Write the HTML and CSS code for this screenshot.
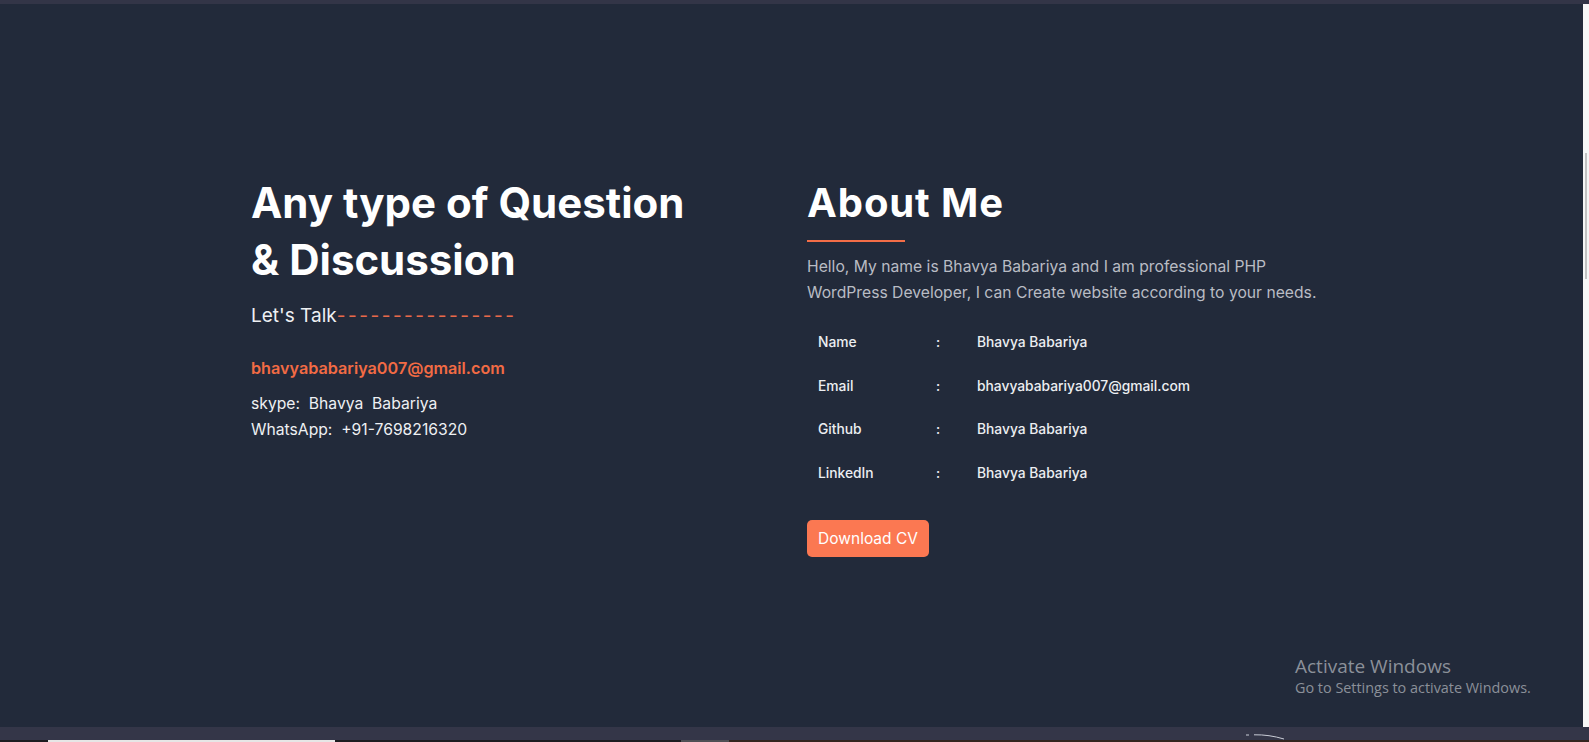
FILE: index.html
```html
<!DOCTYPE html>
<html lang="en">
<head>
<meta charset="utf-8">
<title>Contact &amp; About</title>
<link rel="stylesheet" href="styles.css">
</head>
<body>
<div class="topbar"></div>
<div class="viewport">
  <main class="page">
    <section class="contact">
      <div class="col-left">
        <h1 class="big-title">Any type of Question<br>&amp; Discussion</h1>
        <p class="talk">Let's Talk<span class="dashes">----------------</span></p>
        <a class="mail" href="#">bhavyababariya007@gmail.com</a>
        <p class="info">skype:&nbsp;&nbsp;Bhavya&nbsp;&nbsp;Babariya</p>
        <p class="info">WhatsApp:&nbsp;&nbsp;+91-7698216320</p>
      </div>
      <div class="col-right">
        <h2 class="about-title">About Me</h2>
        <div class="rule"></div>
        <p class="intro">Hello, My name is Bhavya Babariya and I am professional PHP<br>WordPress Developer, I can Create website according to your needs.</p>
        <div class="details">
          <span class="lbl">Name</span><span class="sep">:</span><span class="val">Bhavya Babariya</span>
          <span class="lbl">Email</span><span class="sep">:</span><span class="val">bhavyababariya007@gmail.com</span>
          <span class="lbl">Github</span><span class="sep">:</span><span class="val">Bhavya Babariya</span>
          <span class="lbl">LinkedIn</span><span class="sep">:</span><span class="val">Bhavya Babariya</span>
        </div>
        <a class="btn" href="#">Download CV</a>
      </div>
    </section>
    <div class="activate">
      <div class="act-title">Activate Windows</div>
      <div class="act-sub">Go to Settings to activate Windows.</div>
    </div>
  </main>
  <div class="scrollbar"><div class="thumb"></div></div>
</div>
<div class="bottomband">
  <svg class="glint" width="40" height="6" viewBox="0 0 40 6"><path d="M0 1 L3 1 M8 0.8 C18 0.6 28 2 38 5" stroke="#c9ccd6" stroke-width="1" fill="none"/></svg>
</div>
<div class="taskstrip">
  <div class="seg seg-white"></div>
  <div class="seg seg-dark1"></div>
  <div class="seg seg-gray"></div>
  <div class="seg seg-brown"></div>
</div>
</body>
</html>
```

FILE: styles.css
```css
* { box-sizing: border-box; }
html, body { margin: 0; padding: 0; }
body {
  width: 1589px;
  height: 742px;
  overflow: hidden;
  background: #222a3a;
  font-family: Inter, "Noto Sans", sans-serif;
  color: #fff;
}
.topbar { height: 4px; background: #333547; }
.viewport { display: flex; height: 723px; }
.page {
  flex: 1;
  position: relative;
  background: #222a3a;
}
.scrollbar {
  width: 6px;
  background: #f7f7f7;
  padding-top: 149px;
  padding-left: 2px;
}
.thumb { width: 2px; height: 126px; background: #c3c3c3; }
.bottomband { height: 13px; background: #343648; position: relative; }
.glint { position: absolute; left: 1246px; top: 7px; }
.taskstrip { height: 2px; display: flex; background: #1c1c20; }
.seg { height: 2px; }
.seg-white { margin-left: 48px; width: 287px; background: #e6e6e6; }
.seg-dark1 { width: 346px; background: #1c1c20; }
.seg-gray { width: 48px; background: #4f5055; }
.seg-brown { flex: 1; background: #33251f; }

.contact {
  display: flex;
  padding-top: 170px;
  padding-left: 251px;
}
.col-left { width: 556px; display: flex; flex-direction: column; align-items: flex-start; }
.col-right { display: flex; flex-direction: column; align-items: flex-start; padding-top: 1px; }

.big-title {
  margin: 0;
  font-size: 42px;
  line-height: 57px;
  font-weight: 700;
  color: #fff;
}
.talk {
  margin: 14px 0 0;
  font-size: 19px;
  line-height: 28px;
  color: #eef0f3;
}
.dashes { color: #e8694a; letter-spacing: 2.5px; }
.mail {
  margin-top: 26px;
  font-size: 16.2px;
  line-height: 24px;
  font-weight: 600;
  color: #f26b44;
  text-decoration: none;
}
.info {
  margin: 15px 0 0;
  font-size: 15.7px;
  line-height: 17px;
  color: #eef0f3;
}
.info + .info { margin-top: 9px; }

.about-title {
  margin: 4px 0 0;
  font-size: 40px;
  line-height: 48px;
  font-weight: 700;
  letter-spacing: 0.9px;
  color: #fff;
}
.rule { margin-top: 13px; width: 98px; height: 2px; background: #f36d47; }
.intro {
  margin: 12px 0 0;
  font-size: 15.7px;
  line-height: 25.5px;
  color: #b9bcc4;
}
.details {
  margin-top: 29px;
  padding-left: 11px;
  display: grid;
  grid-template-columns: 118px 41px auto;
  row-gap: 26.6px;
  font-size: 13.8px;
  line-height: 17px;
  font-weight: 500;
  color: #eceef1;
}
.btn {
  margin-top: 38px;
  width: 122px;
  height: 37px;
  display: flex;
  align-items: center;
  justify-content: center;
  background: #fb7852;
  border-radius: 5px;
  color: #fff;
  font-size: 15.5px;
  text-decoration: none;
}

.activate {
  position: absolute;
  left: 1295px;
  top: 650px;
  font-family: "Open Sans", "Noto Sans", sans-serif;
  color: #8b9099;
}
.act-title { font-size: 19px; line-height: 24px; }
.act-sub { font-size: 14.4px; line-height: 20px; }
```
